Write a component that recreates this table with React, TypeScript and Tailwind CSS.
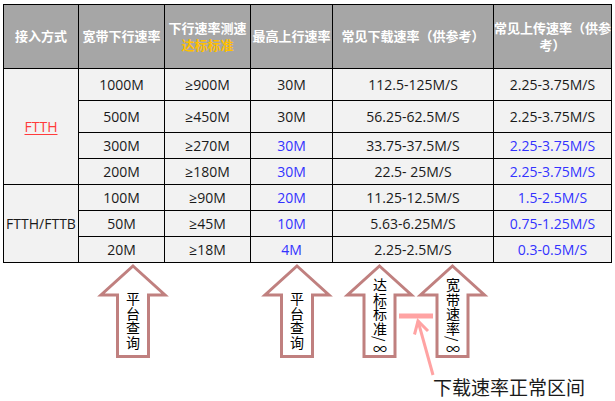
const FONT = "font-['Open_Sans','Noto_Sans_CJK_SC',sans-serif]";

const ROWS = [
  { bw: '1000M', test: '≥900M', up: '30M', down: '112.5-125M/S', ref: '2.25-3.75M/S', blue: false, h: 'h-[32px]' },
  { bw: '500M', test: '≥450M', up: '30M', down: '56.25-62.5M/S', ref: '2.25-3.75M/S', blue: false, h: 'h-[32px]' },
  { bw: '300M', test: '≥270M', up: '30M', down: '33.75-37.5M/S', ref: '2.25-3.75M/S', blue: true, h: 'h-[26px]' },
  { bw: '200M', test: '≥180M', up: '30M', down: '22.5- 25M/S', ref: '2.25-3.75M/S', blue: true, h: 'h-[26px]' },
  { bw: '100M', test: '≥90M', up: '20M', down: '11.25-12.5M/S', ref: '1.5-2.5M/S', blue: true, h: 'h-[26px]' },
  { bw: '50M', test: '≥45M', up: '10M', down: '5.63-6.25M/S', ref: '0.75-1.25M/S', blue: true, h: 'h-[26px]' },
  { bw: '20M', test: '≥18M', up: '4M', down: '2.25-2.5M/S', ref: '0.3-0.5M/S', blue: true, h: 'h-[26px]' },
];

// up arrows under the table, page coordinates
const ARROWS = [133, 297, 379.5, 452.5];

function arrowPoints(cx: number) {
  const tip = 266, head = 295, bottom = 356.5, hw = 32, sw = 15.5;
  return [
    [cx, tip], [cx + hw, head], [cx + sw, head], [cx + sw, bottom],
    [cx - sw, bottom], [cx - sw, head], [cx - hw, head],
  ].map((p) => p.join(',')).join(' ');
}

const th = 'border border-black bg-[#a6a6a6] text-white font-bold text-[13px] leading-[17px] text-center align-middle p-0';
const td = 'border border-black bg-[#f2f2f2] text-[14px] text-center align-middle p-0';
const vtext = "absolute text-[14px] leading-[15px] text-black [writing-mode:vertical-rl] tracking-[0.5px] font-['Noto_Sans_CJK_SC',sans-serif]";

export default function App() {
  return (
    <div className={`w-[615px] h-[401px] bg-white overflow-hidden ${FONT}`}>
      <table className="table-fixed border-collapse w-[608px] ml-[3px] mt-[4px]">
        <colgroup>
          <col className="w-[75px]" />
          <col className="w-[86px]" />
          <col className="w-[86px]" />
          <col className="w-[82px]" />
          <col className="w-[161px]" />
          <col className="w-[118px]" />
        </colgroup>
        <thead>
          <tr className="h-[64px]">
            <th className={th}>接入方式</th>
            <th className={th}>宽带下行速率</th>
            <th className={th}>
              <div className="whitespace-nowrap">下行速率测速</div>
              <div className="text-[#ffc000]">达标标准</div>
            </th>
            <th className={`${th} whitespace-nowrap`}>最高上行速率</th>
            <th className={th}>常见下载速率（供参考）</th>
            <th className={th}>
              <div className="whitespace-nowrap">常见上传速率（供参</div>
              <div>考）</div>
            </th>
          </tr>
        </thead>
        <tbody>
          {ROWS.map((r, i) => (
            <tr key={i} className={r.h}>
              {i === 0 && (
                <td rowSpan={4} className={`${td} text-[#ff3b3b] underline underline-offset-2`}>FTTH</td>
              )}
              {i === 4 && (
                <td rowSpan={3} className={`${td} text-[#1a1a1a]`}>FTTH/FTTB</td>
              )}
              <td className={`${td} text-[#1a1a1a]`}>{r.bw}</td>
              <td className={`${td} text-[#1a1a1a]`}>{r.test}</td>
              <td className={`${td} ${r.blue ? 'text-[#3333ff]' : 'text-[#1a1a1a]'}`}>{r.up}</td>
              <td className={`${td} text-[#1a1a1a]`}>{r.down}</td>
              <td className={`${td} ${r.blue ? 'text-[#3333ff]' : 'text-[#1a1a1a]'}`}>{r.ref}</td>
            </tr>
          ))}
        </tbody>
      </table>

      <div className="relative h-[138px]">
        <svg className="absolute inset-0" width="615" height="138" viewBox="0 263 615 138">
          {ARROWS.map((cx) => (
            <polygon key={cx} points={arrowPoints(cx)} fill="white" stroke="#c0807f" strokeWidth="3" />
          ))}
          <line x1="399" y1="316" x2="433" y2="316" stroke="#ffa3a3" strokeWidth="5" />
          <line x1="433" y1="375" x2="418" y2="321" stroke="#ffa3a3" strokeWidth="3" />
          <polyline points="414.5,334.5 418,321 428,331" fill="none" stroke="#ffa3a3" strokeWidth="3" />
        </svg>
        <span className={`${vtext} left-[125px] top-[29px]`}>平台查询</span>
        <span className={`${vtext} left-[289px] top-[29px]`}>平台查询</span>
        <span className={`${vtext} left-[372px] top-[15px]`}>达标标准/∞</span>
        <span className={`${vtext} left-[445px] top-[15px]`}>宽带速率/∞</span>
        <span className="absolute left-[433px] top-[111px] text-[19px] leading-[26px] text-[#1a1a1a] font-['Noto_Sans_CJK_SC',sans-serif]">下载速率正常区间</span>
      </div>
    </div>
  );
}
